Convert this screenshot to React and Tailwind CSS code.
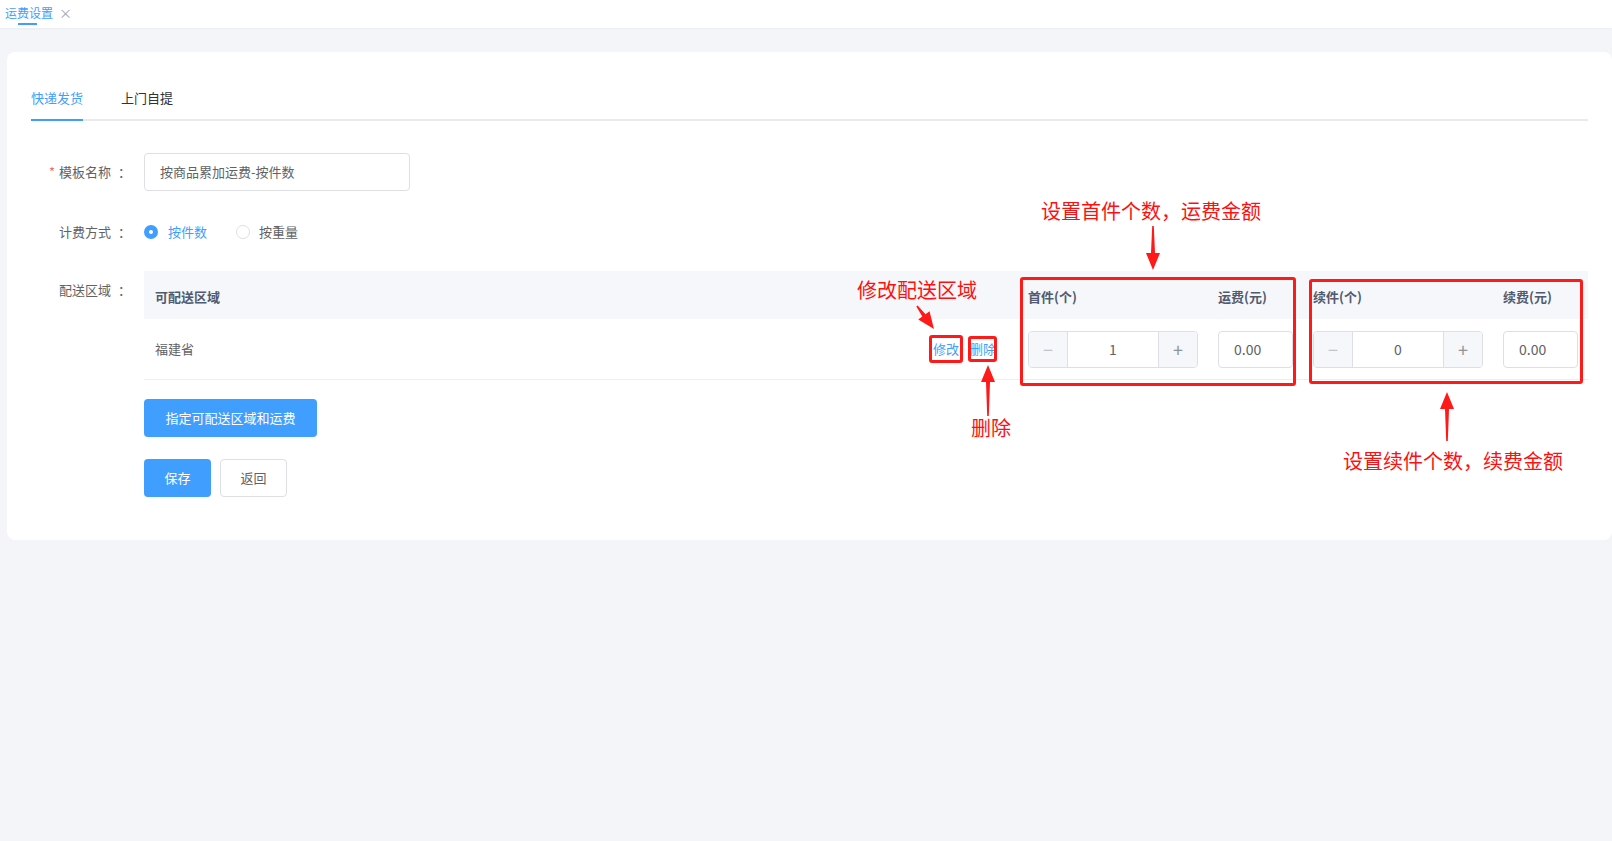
import React from 'react';

// tapered arrow from tail (x1,y1) to tip (x2,y2)
const arrowPoints = (x1, y1, x2, y2, head = 17, half = 7) => {
  const dx = x2 - x1;
  const dy = y2 - y1;
  const len = Math.hypot(dx, dy);
  const ux = dx / len;
  const uy = dy / len;
  const nx = -uy;
  const ny = ux;
  const bx = x2 - ux * head;
  const by = y2 - uy * head;
  const pts = [
    [x1 + nx * 0.8, y1 + ny * 0.8],
    [bx + nx * 2, by + ny * 2],
    [bx + nx * half, by + ny * half],
    [x2, y2],
    [bx - nx * half, by - ny * half],
    [bx - nx * 2, by - ny * 2],
    [x1 - nx * 0.8, y1 - ny * 0.8],
  ];
  return pts.map((p) => p.join(',')).join(' ');
};

const Stepper = ({ value }) => (
  <div className="flex h-[37px] w-[170px] overflow-hidden rounded-[4px] border border-[#dcdfe6] bg-white">
    <div className="flex w-[39px] items-center justify-center border-r border-[#dcdfe6] bg-[#f5f7fa] text-[18px] leading-none text-[#c0c4cc]">−</div>
    <div className="flex flex-1 items-center justify-center text-[14px] text-[#606266]">{value}</div>
    <div className="flex w-[39px] items-center justify-center border-l border-[#dcdfe6] bg-[#f5f7fa] text-[18px] leading-none text-[#909399]">+</div>
  </div>
);

const PriceInput = ({ value }) => (
  <div className="flex h-[37px] w-[75px] items-center rounded-[4px] border border-[#dcdfe6] bg-white pl-[15px] text-[14px] text-[#606266]">
    {value}
  </div>
);

const FormLabel = ({ children, required }) => (
  <div className="flex w-[113px] shrink-0 items-center justify-end pr-[12px] text-[13px] text-[#606266]">
    {required && <span className="mr-[4px] text-[#f56c6c]">*</span>}
    <span>{children}</span>
    <span className="ml-[7px] inline-block w-[14px]">：</span>
  </div>
);

const Note = ({ className, children }) => (
  <span className={`absolute whitespace-nowrap text-[20px] leading-[24px] text-[#ff0f0f] ${className}`}>{children}</span>
);

const App = () => {
  const arrows = [
    [1153, 226, 1153, 270],
    [917, 306, 934, 329],
    [988, 416, 988, 365],
    [1447, 441, 1447, 392],
  ];

  return (
    <div className="relative min-h-screen bg-[#f4f5f9] font-['Noto_Sans_CJK_SC','Liberation_Sans',sans-serif]">
      {/* page tabs */}
      <div className="flex h-[28px] items-start bg-white pl-[5px] shadow-[0_1px_2px_rgba(0,0,0,0.04)]">
        <div className="relative flex h-[25px] items-center">
          <span className="text-[12px] leading-none text-[#409eff]">运费设置</span>
          <span className="absolute bottom-[0px] left-[13px] h-[2px] w-[19px] bg-[#409eff]" />
        </div>
        <span className="ml-[6px] flex h-[24px] items-center text-[13px] leading-none text-[#a0a4ab]">×</span>
      </div>

      <div className="ml-[7px] mt-[24px] rounded-[8px] bg-white px-[24px] pb-[43px] pt-[28px]">
        {/* delivery type tabs */}
        <div className="flex h-[41px] gap-[38px] border-b-2 border-[#e8eaef] text-[13px]">
          <div className="relative flex items-center pb-[4px] text-[#409eff]">
            快递发货
            <span className="absolute -bottom-[2px] left-0 right-0 h-[2px] bg-[#409eff]" />
          </div>
          <div className="flex items-center pb-[4px] text-[#303133]">上门自提</div>
        </div>

        {/* template name */}
        <div className="mt-[32px] flex h-[38px] items-center">
          <FormLabel required>模板名称</FormLabel>
          <div className="flex h-[38px] w-[266px] items-center rounded-[4px] border border-[#dcdfe6] pl-[15px] text-[13px] text-[#606266]">
            按商品累加运费-按件数
          </div>
        </div>

        {/* billing method */}
        <div className="mt-[22px] flex h-[38px] items-center">
          <FormLabel>计费方式</FormLabel>
          <div className="flex items-center text-[13px]">
            <span className="flex h-[14px] w-[14px] items-center justify-center rounded-full bg-[#409eff]">
              <span className="h-[4px] w-[4px] rounded-full bg-white" />
            </span>
            <span className="ml-[10px] text-[#409eff]">按件数</span>
            <span className="ml-[29px] h-[14px] w-[14px] rounded-full border border-[#dcdfe6]" />
            <span className="ml-[9px] text-[#606266]">按重量</span>
          </div>
        </div>

        {/* delivery areas */}
        <div className="mt-[20px] flex">
          <div className="flex h-[38px] items-center">
            <FormLabel>配送区域</FormLabel>
          </div>
          <div className="flex-1">
            <div className="text-[13px]">
              <div className="flex h-[48px] items-center bg-[#f5f7fa] pt-[3px] font-bold text-[#515a6e]">
                <div className="flex-1 pl-[11px]">可配送区域</div>
                <div className="w-[190px] pl-[10px]">首件(个)</div>
                <div className="w-[95px] pl-[10px]">运费(元)</div>
                <div className="w-[190px] pl-[10px]">续件(个)</div>
                <div className="w-[95px] pl-[10px]">续费(元)</div>
              </div>
              <div className="flex h-[61px] items-center border-b border-[#ebeef5]">
                <div className="flex flex-1 items-center justify-between pl-[11px] pr-[22px]">
                  <span className="text-[#606266]">福建省</span>
                  <div className="flex gap-[11px] text-[#409eff]">
                    <span>修改</span>
                    <span>删除</span>
                  </div>
                </div>
                <div className="w-[190px] pl-[10px]">
                  <Stepper value="1" />
                </div>
                <div className="w-[95px] pl-[10px]">
                  <PriceInput value="0.00" />
                </div>
                <div className="w-[190px] pl-[10px]">
                  <Stepper value="0" />
                </div>
                <div className="w-[95px] pl-[10px]">
                  <PriceInput value="0.00" />
                </div>
              </div>
            </div>
            <button className="mt-[19px] h-[38px] w-[173px] rounded-[4px] bg-[#409eff] text-[13px] text-white">
              指定可配送区域和运费
            </button>
          </div>
        </div>

        {/* actions */}
        <div className="mt-[22px] flex h-[38px] items-center pl-[113px]">
          <button className="h-[38px] w-[67px] rounded-[4px] bg-[#409eff] text-[13px] text-white">保存</button>
          <button className="ml-[9px] h-[38px] w-[67px] rounded-[4px] border border-[#dcdfe6] bg-white text-[13px] text-[#606266]">返回</button>
        </div>
      </div>

      {/* callouts */}
      <div className="pointer-events-none absolute inset-0">
        <div className="absolute left-[929px] top-[335px] h-[28px] w-[34px] rounded-[3px] border-[3px] border-[#ff1a1a]" />
        <div className="absolute left-[968px] top-[336px] h-[26px] w-[29px] rounded-[3px] border-[3px] border-[#ff1a1a]" />
        <div className="absolute left-[1020px] top-[277px] h-[109px] w-[276px] rounded-[3px] border-[3px] border-[#ff1a1a]" />
        <div className="absolute left-[1309px] top-[279px] h-[105px] w-[274px] rounded-[3px] border-[3px] border-[#ff1a1a]" />

        <Note className="left-[1041px] top-[199px]">设置首件个数，运费金额</Note>
        <Note className="left-[857px] top-[278px]">修改配送区域</Note>
        <Note className="left-[971px] top-[416px]">删除</Note>
        <Note className="left-[1343px] top-[449px]">设置续件个数，续费金额</Note>

        <svg className="absolute left-0 top-0" width="1612" height="841">
          {arrows.map((a, i) => (
            <polygon key={i} points={arrowPoints(...a)} fill="#ff1a1a" />
          ))}
        </svg>
      </div>
    </div>
  );
};

export default App;
